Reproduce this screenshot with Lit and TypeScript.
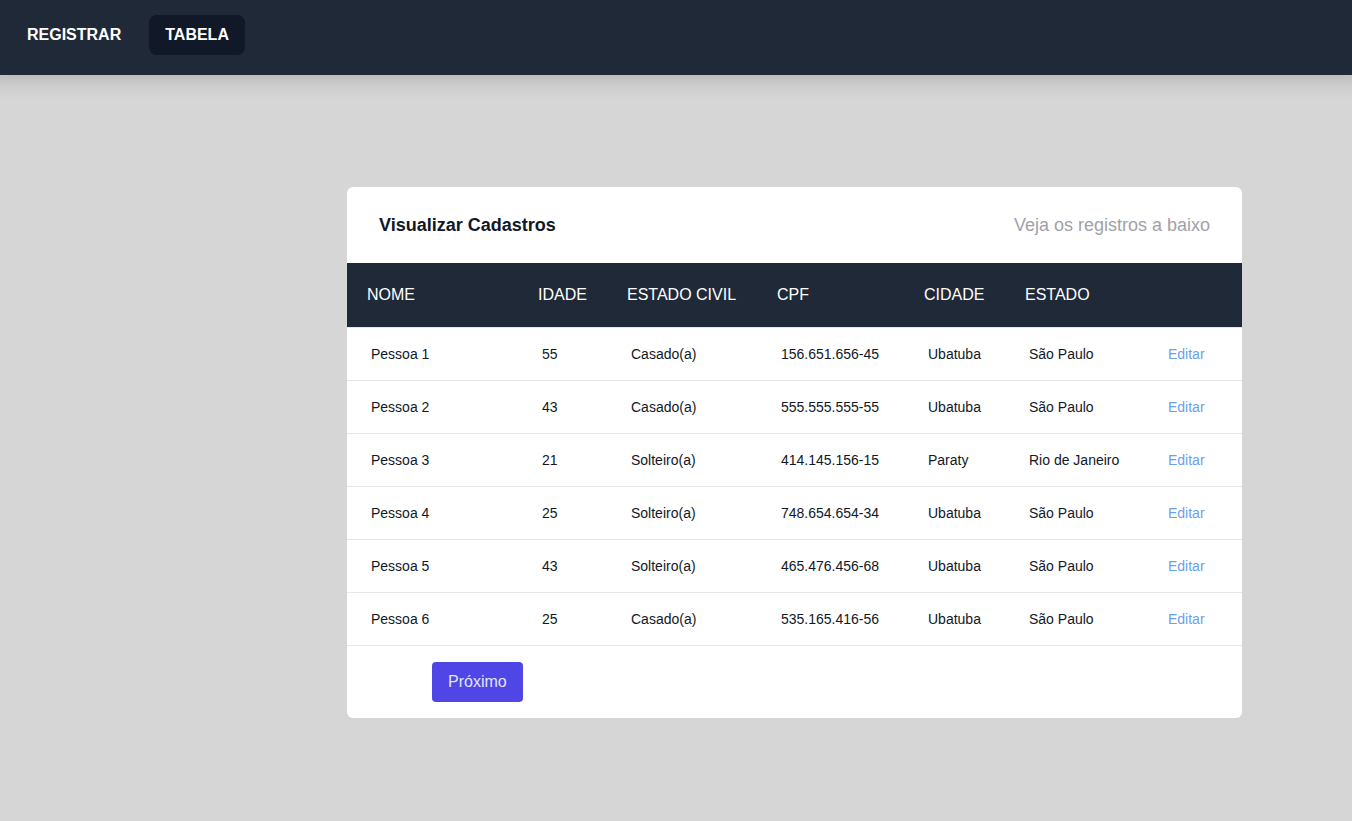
import { LitElement, html, css } from "lit";
import { customElement, state } from "lit/decorators.js";

interface Pessoa {
  nome: string;
  idade: number;
  estadoCivil: string;
  cpf: string;
  cidade: string;
  estado: string;
}

const PESSOAS: Pessoa[] = [
  { nome: "Pessoa 1", idade: 55, estadoCivil: "Casado(a)", cpf: "156.651.656-45", cidade: "Ubatuba", estado: "São Paulo" },
  { nome: "Pessoa 2", idade: 43, estadoCivil: "Casado(a)", cpf: "555.555.555-55", cidade: "Ubatuba", estado: "São Paulo" },
  { nome: "Pessoa 3", idade: 21, estadoCivil: "Solteiro(a)", cpf: "414.145.156-15", cidade: "Paraty", estado: "Rio de Janeiro" },
  { nome: "Pessoa 4", idade: 25, estadoCivil: "Solteiro(a)", cpf: "748.654.654-34", cidade: "Ubatuba", estado: "São Paulo" },
  { nome: "Pessoa 5", idade: 43, estadoCivil: "Solteiro(a)", cpf: "465.476.456-68", cidade: "Ubatuba", estado: "São Paulo" },
  { nome: "Pessoa 6", idade: 25, estadoCivil: "Casado(a)", cpf: "535.165.416-56", cidade: "Ubatuba", estado: "São Paulo" },
];

@customElement("app-root")
export class AppRoot extends LitElement {
  @state() private pessoas = PESSOAS;

  static styles = css`
    :host {
      display: block;
      min-height: 100vh;
      box-sizing: border-box;
      background: #d6d6d6;
      color: #111827;
      font-family: "Liberation Sans", Arial, sans-serif;
      font-size: 16px;
      line-height: 24px;
    }
    a {
      text-decoration: none;
    }
    .nav {
      display: flex;
      gap: 12px;
      padding: 15px 11px 20px;
      background: #1f2937;
      box-shadow: 0 -12px 20px 16px rgba(0, 0, 0, 0.18);
    }
    .link {
      padding: 8px 16px;
      border-radius: 8px;
      color: #fff;
      font-weight: 700;
    }
    .active {
      background: #111827;
    }
    .main {
      padding: 112px 110px 48px 347px;
    }
    .card {
      overflow: hidden;
      border-radius: 6px;
      background: #fff;
    }
    .head {
      display: flex;
      justify-content: space-between;
      align-items: center;
      padding: 24px 32px;
      font-size: 18px;
      line-height: 28px;
    }
    .title {
      margin: 0;
      font-size: 18px;
      font-weight: 700;
    }
    .hint {
      margin: 0;
      color: #a1a1aa;
    }
    .table {
      width: 100%;
      border-collapse: separate;
      border-spacing: 0;
      text-align: left;
    }
    .nome { width: 171px; }
    .idade { width: 89px; }
    .civil { width: 150px; }
    .cpf { width: 147px; }
    .cidade { width: 101px; }
    .estado { width: 139px; }
    th {
      padding: 20px;
      background: #1f2937;
      background-clip: padding-box;
      border-bottom: 1px solid #e5e7eb;
      color: #fff;
      font-weight: 400;
      white-space: nowrap;
      box-sizing: border-box;
    }
    td {
      padding: 16px 24px;
      border-bottom: 1px solid #e5e7eb;
      font-size: 14px;
      line-height: 20px;
      white-space: nowrap;
    }
    .edit a {
      color: #6ba0ee;
    }
    .foot {
      display: flex;
      padding: 16px 85px;
    }
    .next {
      padding: 8px 16px;
      border: 0;
      border-radius: 4px;
      background: #4f46e5;
      color: #e0e7ff;
      font: inherit;
      cursor: pointer;
    }
  `;

  render() {
    return html`
      <nav class="nav">
        <a class="link" href="#registrar">REGISTRAR</a>
        <a class="link active" href="#tabela" aria-current="page">TABELA</a>
      </nav>
      <main class="main">
        <section class="card">
          <header class="head">
            <h1 class="title">Visualizar Cadastros</h1>
            <p class="hint">Veja os registros a baixo</p>
          </header>
          <table class="table">
            <thead>
              <tr>
                <th class="nome" scope="col">NOME</th>
                <th class="idade" scope="col">IDADE</th>
                <th class="civil" scope="col">ESTADO CIVIL</th>
                <th class="cpf" scope="col">CPF</th>
                <th class="cidade" scope="col">CIDADE</th>
                <th class="estado" scope="col">ESTADO</th>
                <th scope="col"></th>
              </tr>
            </thead>
            <tbody>
              ${this.pessoas.map(
                (p) => html`
                  <tr>
                    <td>${p.nome}</td>
                    <td>${p.idade}</td>
                    <td>${p.estadoCivil}</td>
                    <td>${p.cpf}</td>
                    <td>${p.cidade}</td>
                    <td>${p.estado}</td>
                    <td class="edit"><a href="#editar">Editar</a></td>
                  </tr>
                `
              )}
            </tbody>
          </table>
          <footer class="foot">
            <button class="next" type="button">Próximo</button>
          </footer>
        </section>
      </main>
    `;
  }
}
